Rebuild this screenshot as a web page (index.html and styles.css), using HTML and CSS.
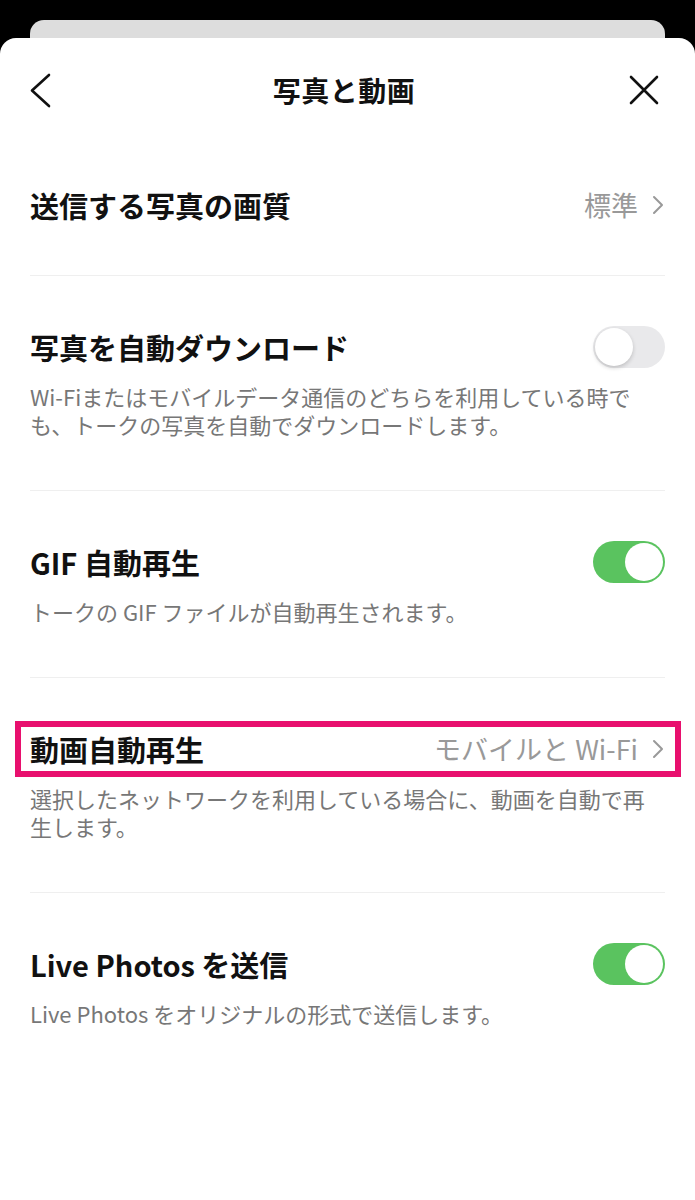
FILE: index.html
```html
<!DOCTYPE html>
<html lang="ja">
<head>
  <meta charset="UTF-8">
  <title>写真と動画</title>
  <link rel="stylesheet" href="styles.css">
</head>
<body>
  <div class="back-card"></div>
  <div class="sheet">
    <div class="header">
      <span class="header-btn left">
        <svg width="24" height="36" viewBox="0 0 24 36"><polyline points="20,3 3,18.5 20,34" fill="none" stroke="#111" stroke-width="2.6" stroke-linecap="round" stroke-linejoin="round"/></svg>
      </span>
      <h1 class="title">写真と動画</h1>
      <span class="header-btn right">
        <svg width="30" height="30" viewBox="0 0 30 30"><path d="M2 2 L28 28 M28 2 L2 28" fill="none" stroke="#111" stroke-width="2.6" stroke-linecap="round"/></svg>
      </span>
    </div>

    <div class="section first">
      <div class="row">
        <span class="label">送信する写真の画質</span>
        <span class="value">標準
          <svg class="chev" width="12" height="20" viewBox="0 0 12 20"><polyline points="2,2 10,10 2,18" fill="none" stroke="#999" stroke-width="2" stroke-linecap="round" stroke-linejoin="round"/></svg>
        </span>
      </div>
    </div>

    <div class="section">
      <div class="row">
        <span class="label">写真を自動ダウンロード</span>
        <span class="toggle"></span>
      </div>
      <p class="desc">Wi-Fiまたはモバイルデータ通信のどちらを利用している時でも、トークの写真を自動でダウンロードします。</p>
    </div>

    <div class="section">
      <div class="row">
        <span class="label">GIF 自動再生</span>
        <span class="toggle on"></span>
      </div>
      <p class="desc">トークの GIF ファイルが自動再生されます。</p>
    </div>

    <div class="section">
      <div class="row marked">
        <span class="label">動画自動再生</span>
        <span class="value">モバイルと Wi-Fi
          <svg class="chev" width="12" height="20" viewBox="0 0 12 20"><polyline points="2,2 10,10 2,18" fill="none" stroke="#999" stroke-width="2" stroke-linecap="round" stroke-linejoin="round"/></svg>
        </span>
      </div>
      <p class="desc">選択したネットワークを利用している場合に、動画を自動で再生します。</p>
    </div>

    <div class="section last">
      <div class="row">
        <span class="label">Live Photos を送信</span>
        <span class="toggle on"></span>
      </div>
      <p class="desc">Live Photos をオリジナルの形式で送信します。</p>
    </div>
  </div>
</body>
</html>
```

FILE: styles.css
```css
body {
  margin: 0;
  background: #000;
  font-family: "Noto Sans CJK JP", "Noto Sans", sans-serif;
  color: #111;
}
.back-card {
  margin: 20px 30px 0 30px;
  height: 18px;
  background: #dddddd;
  border-radius: 14px 14px 0 0;
}
.sheet {
  background: #fff;
  border-radius: 16px 16px 0 0;
  min-height: 1162px;
}
.header {
  height: 104px;
  display: grid;
  grid-template-columns: 1fr auto 1fr;
  align-items: center;
  padding: 0 36px 0 29px;
}
.header-btn {
  display: flex;
}
.header-btn.right {
  justify-content: flex-end;
}
.title {
  margin: 0;
  font-size: 28px;
  font-weight: 700;
  letter-spacing: 0.5px;
}
.section {
  margin: 0 30px;
  padding: 50px 0 52px 0;
  border-bottom: 1px solid #efefef;
}
.section.first {
  padding: 42px 0 49px 0;
}
.section.last {
  border-bottom: none;
}
.row {
  height: 42px;
  display: flex;
  align-items: center;
  justify-content: space-between;
}
.row.marked {
  position: relative;
}
.row.marked::after {
  content: "";
  position: absolute;
  top: -7px;
  bottom: -7px;
  left: -15px;
  right: -16px;
  border: 6px solid #e8106e;
}
.label {
  font-size: 29px;
  font-weight: 700;
  line-height: 42px;
  white-space: nowrap;
}
.value {
  display: flex;
  align-items: center;
  gap: 14px;
  font-size: 27px;
  color: #999;
  line-height: 42px;
  white-space: nowrap;
}
.chev {
  margin-right: 1px;
}
.desc {
  margin: 14px 0 0 0;
  font-size: 22px;
  line-height: 28px;
  color: #777;
}
.toggle {
  position: relative;
  width: 72px;
  height: 42px;
  border-radius: 21px;
  background: #e9e9eb;
  flex-shrink: 0;
}
.toggle::after {
  content: "";
  position: absolute;
  top: 2px;
  left: 2px;
  width: 38px;
  height: 38px;
  border-radius: 50%;
  background: #fff;
  box-shadow: 0 2px 4px rgba(0,0,0,0.18);
}
.toggle.on {
  background: #5ac35f;
}
.toggle.on::after {
  left: 32px;
  box-shadow: none;
}
```
